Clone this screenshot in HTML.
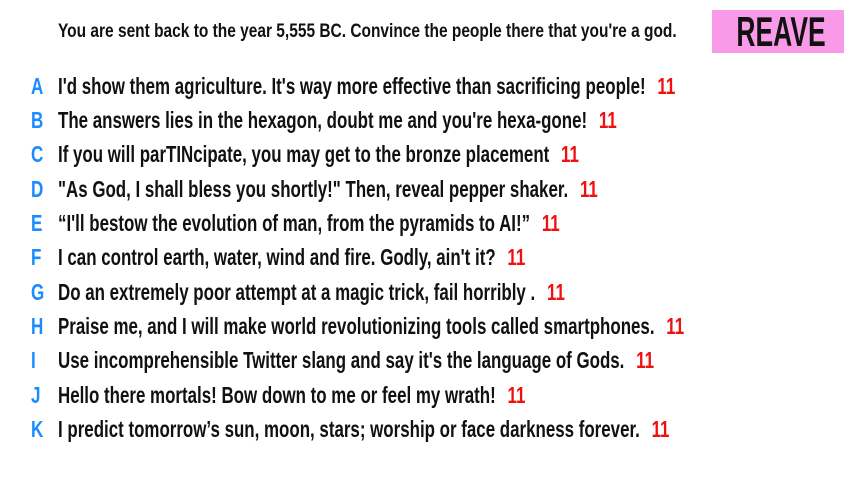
<!DOCTYPE html>
<html><head><meta charset="utf-8"><style>
html,body{margin:0;padding:0;background:#fff;width:853px;height:480px;overflow:hidden}
body{font-family:"Liberation Sans",sans-serif;color:#111;position:relative}
.title{position:absolute;left:58px;top:21px;font-size:19px;font-weight:bold;white-space:nowrap;transform:scaleX(0.815);transform-origin:0 0}
.badge{position:absolute;left:712px;top:10px;width:132px;height:43px;background:#f99ae8}
.badge span{position:absolute;left:0;width:132px;top:0;text-align:center;font-size:42px;font-weight:bold;line-height:44px;color:#111;transform:scaleX(0.63);transform-origin:50% 0}
.row{position:absolute;left:0;height:30px;font-size:23px;font-weight:bold;white-space:nowrap}
.row .l{position:absolute;left:31px;color:#1a8cff;transform:scaleX(0.74);transform-origin:0 0}
.row .t{position:absolute;left:58px;transform:scaleX(0.735);transform-origin:0 0}
.row .n{color:#f01010;margin-left:16px}
</style></head><body>
<div class="title">You are sent back to the year 5,555 BC. Convince the people there that you're a god.</div>
<div class="badge"><span>REAVE</span></div>
<div class="row" style="top:73px"><span class="l">A</span><span class="t">I'd show them agriculture. It's way more effective than sacrificing people!<span class="n">11</span></span></div>
<div class="row" style="top:107px"><span class="l">B</span><span class="t">The answers lies in the hexagon, doubt me and you're hexa-gone!<span class="n">11</span></span></div>
<div class="row" style="top:141px"><span class="l">C</span><span class="t">If you will parTINcipate, you may get to the bronze placement<span class="n">11</span></span></div>
<div class="row" style="top:176px"><span class="l">D</span><span class="t">"As God, I shall bless you shortly!" Then, reveal pepper shaker.<span class="n">11</span></span></div>
<div class="row" style="top:210px"><span class="l">E</span><span class="t">“I'll bestow the evolution of man, from the pyramids to AI!”<span class="n">11</span></span></div>
<div class="row" style="top:244px"><span class="l">F</span><span class="t">I can control earth, water, wind and fire. Godly, ain't it?<span class="n">11</span></span></div>
<div class="row" style="top:279px"><span class="l">G</span><span class="t">Do an extremely poor attempt at a magic trick, fail horribly .<span class="n">11</span></span></div>
<div class="row" style="top:313px"><span class="l">H</span><span class="t">Praise me, and I will make world revolutionizing tools called smartphones.<span class="n">11</span></span></div>
<div class="row" style="top:347px"><span class="l">I</span><span class="t">Use incomprehensible Twitter slang and say it's the language of Gods.<span class="n">11</span></span></div>
<div class="row" style="top:382px"><span class="l">J</span><span class="t">Hello there mortals! Bow down to me or feel my wrath!<span class="n">11</span></span></div>
<div class="row" style="top:416px"><span class="l">K</span><span class="t">I predict tomorrow’s sun, moon, stars; worship or face darkness forever.<span class="n">11</span></span></div>
</body></html>
